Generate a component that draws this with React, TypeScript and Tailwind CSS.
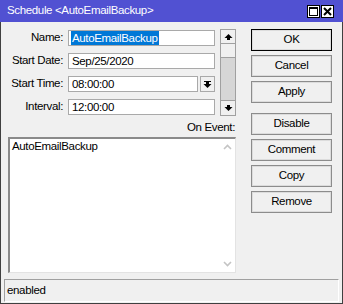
const FONT = { fontFamily: '"Liberation Sans", Arial, sans-serif' };

function ArrowUp() {
  return (
    <svg width="9" height="8" viewBox="0 0 9 8">
      <path d="M4.5 1 L8.5 5 L0.5 5 Z" fill="#000" />
      <rect x="3" y="5" width="3" height="2" fill="#000" />
    </svg>
  );
}

function ArrowDown() {
  return (
    <svg width="9" height="8" viewBox="0 0 9 8">
      <rect x="3" y="1" width="3" height="2" fill="#000" />
      <path d="M0.5 3 L8.5 3 L4.5 7 Z" fill="#000" />
    </svg>
  );
}

function DropIcon() {
  return (
    <svg width="9" height="9" viewBox="0 0 9 9">
      <rect x="1" y="1" width="7" height="1" fill="#000" />
      <rect x="3" y="2" width="3" height="2" fill="#000" />
      <path d="M0.5 4 L8.5 4 L4.5 8 Z" fill="#000" />
    </svg>
  );
}

function Field({ label, value, selected, drop }: { label: string; value: string; selected?: boolean; drop?: boolean }) {
  return (
    <div className="flex h-[16px] items-center">
      <span className="w-[62px] text-right leading-none">{label}</span>
      <div className={`ml-[5px] flex h-[16px] items-center border border-[#a9a9a9] bg-white pl-[2px] ${drop ? "w-[130px]" : "w-[147px]"}`}>
        {selected ? (
          <span className="bg-[#0078d7] px-px leading-[14px] text-white">{value}</span>
        ) : (
          <span className="pl-px leading-[14px]">{value}</span>
        )}
      </div>
      {drop && (
        <div className="ml-[2px] flex h-[16px] w-[15px] items-center justify-center border border-[#a9a9a9] bg-[#f0f0f0]">
          <DropIcon />
        </div>
      )}
    </div>
  );
}

function Btn({ label, primary, className }: { label: string; primary?: boolean; className?: string }) {
  return (
    <div
      className={`flex h-[22px] w-[81px] items-center justify-center border bg-[#f0f0f0] shadow-[inset_0_0_0_1px_#dcdcdc] ${
        primary ? "border-black" : "border-[#8c8c8c]"
      } ${className ?? ""}`}
    >
      {label}
    </div>
  );
}

export default function App() {
  return (
    <div className="flex h-[304px] w-[343px] flex-col bg-[#f0f0f0] text-[11.5px] tracking-[-0.35px] text-black" style={FONT}>
      {/* title bar */}
      <div className="flex h-[22px] shrink-0 items-center bg-[#5151d2] pl-[7px] pr-[9px] text-white">
        <span>Schedule &lt;AutoEmailBackup&gt;</span>
        <div className="ml-auto flex gap-px">
          <div className="flex h-[13px] w-[13px] items-center justify-center border border-black bg-white">
            <div className="h-[9px] w-[9px] border border-t-2 border-black" />
          </div>
          <div className="flex h-[13px] w-[13px] items-center justify-center border border-black bg-white">
            <svg width="9" height="9" viewBox="0 0 9 9">
              <path d="M1 1 L8 8 M8 1 L1 8" stroke="#000" strokeWidth="2" />
            </svg>
          </div>
        </div>
      </div>

      {/* body */}
      <div className="flex flex-1 flex-col border-x border-b border-[#404040]">
        <div className="flex pt-[7px]">
          <div className="w-[235px]">
            <div className="flex">
              <div className="mt-px flex flex-col gap-[7px]">
                <Field label="Name:" value="AutoEmailBackup" selected />
                <Field label="Start Date:" value="Sep/25/2020" />
                <Field label="Start Time:" value="08:00:00" drop />
                <Field label="Interval:" value="12:00:00" />
              </div>
              <div className="ml-auto flex h-[87px] w-[16px] flex-col border border-[#a0a0a0] bg-[#d6d6d6]">
                <div className="flex h-[14px] items-center justify-center border-b border-[#a0a0a0] bg-[#f0f0f0]">
                  <ArrowUp />
                </div>
                <div className="h-[14px] border-b border-[#a0a0a0] bg-[#f0f0f0]" />
                <div className="flex-1" />
                <div className="flex h-[15px] items-center justify-center border-t border-[#a0a0a0] bg-[#f0f0f0]">
                  <ArrowDown />
                </div>
              </div>
            </div>
            <div className="mt-[4px] h-[14px] pr-px text-right leading-[14px]">On Event:</div>
            <div className="ml-[7px] mt-[3px] flex h-[136px] w-[228px] border-l-2 border-t-2 border-b border-r border-l-[#8a8a8a] border-t-[#8a8a8a] border-b-[#e3e3e3] border-r-[#e3e3e3] bg-white">
              <div className="flex-1 pl-[2px] pt-px leading-[13px]">AutoEmailBackup</div>
              <div className="flex w-[16px] flex-col items-center justify-between py-[5px]">
                <svg width="9" height="6" viewBox="0 0 9 6">
                  <path d="M1 5 L4.5 1.5 L8 5" stroke="#c4c4c4" strokeWidth="1.6" fill="none" />
                </svg>
                <svg width="9" height="6" viewBox="0 0 9 6">
                  <path d="M1 1 L4.5 4.5 L8 1" stroke="#c4c4c4" strokeWidth="1.6" fill="none" />
                </svg>
              </div>
            </div>
          </div>

          <div className="ml-[15px] flex flex-col gap-[4px]">
            <Btn label="OK" primary />
            <Btn label="Cancel" />
            <Btn label="Apply" />
            <Btn label="Disable" className="mt-[6px]" />
            <Btn label="Comment" />
            <Btn label="Copy" />
            <Btn label="Remove" />
          </div>
        </div>

        {/* status bar */}
        <div className="mx-[3px] mb-[1px] mt-auto flex h-[23px] items-center border border-b-white border-l-[#a0a0a0] border-r-white border-t-[#a0a0a0] pl-[2px]">
          enabled
        </div>
      </div>
    </div>
  );
}
